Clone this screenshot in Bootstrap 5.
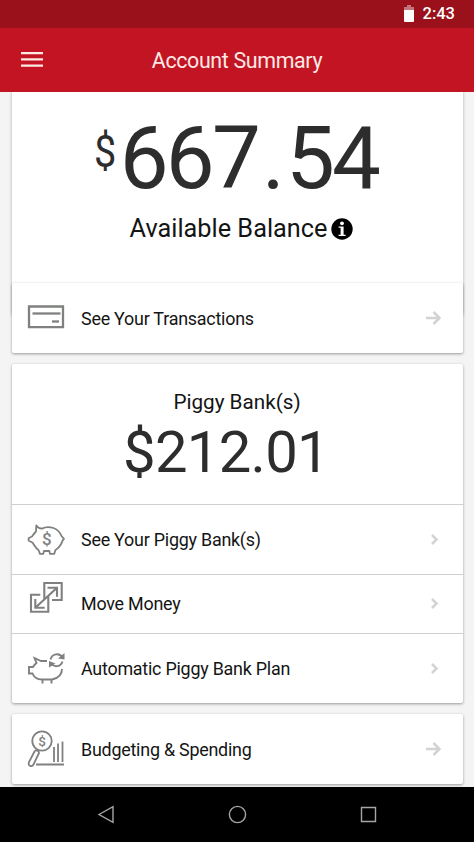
<!DOCTYPE html>
<html lang="en">
<head>
<meta charset="utf-8">
<meta name="viewport" content="width=device-width, initial-scale=1">
<title>Account Summary</title>
<link rel="stylesheet" href="https://cdn.jsdelivr.net/npm/bootstrap@5.3.0/dist/css/bootstrap.min.css">
<style>
body{font-family:Roboto,"Liberation Sans",sans-serif;background:#f4f4f4;color:#141414;width:474px;height:842px;overflow:hidden}
.status-bar{height:28px;background:#9a101b;color:#fff;padding-right:19px;gap:9px;font-size:16.5px;font-weight:500;line-height:30px}
.app-bar{height:64px;background:#c31424;color:#ffe9e4}
.app-bar .btn{width:44px;height:44px;margin-left:10px}
.app-title{font-size:21.4px;letter-spacing:-.35px;line-height:62px;padding-top:2px}
.app-side{width:64px}
.page-body{height:695px;padding:0 11.5px}
.panel{border:0;border-radius:2px;box-shadow:0 1px 3px rgba(0,0,0,.38);background:#fff}
.panel-top{height:223px;margin-bottom:-32px;border-radius:0;box-shadow:0 0 3px rgba(0,0,0,.3)}
.panel-gap{margin-top:11px}
.amount{color:#2d2d2d;white-space:nowrap}
.amount-main{height:110px;margin-top:11px;font-size:87px;line-height:110px;letter-spacing:-2.8px;padding-left:2px}
.amount-main .currency{font-size:45px;line-height:98px;letter-spacing:0;width:22px;margin-left:-4px;margin-right:4px;transform:scaleX(.88);transform-origin:left}
.amount-main .point{letter-spacing:0;margin-left:4px;margin-right:1px}
.balance-label{font-size:25.3px;line-height:32px;gap:4px;padding-left:9px}
.piggy-head{height:140px;padding-top:22px}
.piggy-title{font-size:20.7px;line-height:32px}
.amount-piggy{font-size:58px;line-height:69px;letter-spacing:-.7px;padding-right:22px}
.row-link{height:70px;padding:0 19px 0 14.5px;font-size:17.9px;letter-spacing:-.23px;color:#141414}
.row-link svg{flex:none;overflow:visible}
.row-link .label{margin-left:15px;padding-top:2px}
.row-divider{border-top:1px solid #cfcfcf}
.row-divider .label{padding-top:1px}
.row-short{height:59px}
.nav-bar{height:55px;background:#000}
.ico{fill:none;stroke:#7f817f;stroke-width:2.3}
.ico text{fill:#7f817f;stroke:none;font-weight:500}
.go{fill:none;stroke:#d3d3d3;stroke-width:2.5}
.nav-bar svg{fill:none;stroke:#a6a6a6;stroke-width:1.4}
</style>
</head>
<body>
<div class="status-bar d-flex justify-content-end align-items-center">
  <svg width="10" height="18" viewBox="0 0 10 18"><path d="M0 2h3V0h4v2h3v3H0z" fill="#c5747a"/><path d="M0 5h10v11a1 1 0 0 1-1 1H1a1 1 0 0 1-1-1z" fill="#fff"/></svg>
  <span>2:43</span>
</div>
<header class="app-bar d-flex align-items-center">
  <div class="app-side"><button class="btn border-0 p-0 d-flex align-items-center justify-content-center" aria-label="Menu">
    <svg width="22" height="16" viewBox="0 0 22 16"><path d="M0 1h22M0 7.300h22M0 13.600h22" stroke="#ffe9e4" stroke-width="2.300"/></svg>
  </button></div>
  <div class="app-title flex-grow-1 text-center">Account Summary</div>
  <div class="app-side"></div>
</header>
<main class="page-body overflow-hidden">
  <section class="panel panel-top d-flex flex-column align-items-center">
    <div class="amount amount-main d-flex"><span class="currency">$</span><span>667<span class="point">.</span>54</span></div>
    <div class="balance-label d-flex align-items-center"><span>Available Balance</span>
      <svg width="22" height="22" viewBox="0 0 22 22"><circle cx="11" cy="11" r="10.700"/><circle cx="11" cy="5.300" r="1.900" fill="#fff"/><path d="M7.600 8.500h5v8.300h2v1.200H7.600v-1.200h2V9.700h-2z" fill="#fff"/></svg>
    </div>
  </section>
  <section class="panel position-relative">
    <a href="#" class="row-link d-flex align-items-center text-decoration-none">
      <svg class="ico" width="40" height="40" viewBox="0 0 40 40"><path d="M3 8.500h34v20.600H3z"/><path d="M6.500 15.500h28"/><path d="M26 23.500h7"/></svg>
      <span class="label me-auto">See Your Transactions</span>
      <svg class="go" width="20" height="20" viewBox="0 0 20 20"><path d="M2 10h13M9.500 4l6 6-6 6"/></svg>
    </a>
  </section>
  <section class="panel panel-gap">
    <div class="piggy-head text-center">
      <div class="piggy-title">Piggy Bank(s)</div>
      <div class="amount amount-piggy">$212.01</div>
    </div>
    <a href="#" class="row-link row-divider d-flex align-items-center text-decoration-none">
      <svg class="ico" width="40" height="40" viewBox="0 0 40 40"><path d="M10.300 5.500 Q12 8.500 16 8.600 Q21 5.800 27.500 8 Q33.500 10.500 35.500 16 L38 18.800 Q36.500 20 35.300 23.800 Q33 28 29.300 30.300 L28.300 33.800H24L23.300 31H18L17.300 33.800H14L12.500 30Q10 28.500 6.700 22.800L2.600 20.500V18.200L6 16.500 Q8 13.500 10 11.500Z" stroke-width="1.800" stroke-linejoin="round"/><text x="20.800" y="25.200" text-anchor="middle" font-size="17">$</text></svg>
      <span class="label me-auto">See Your Piggy Bank(s)</span>
      <svg class="go" width="20" height="20" viewBox="0 0 20 20"><path d="M8 5l4.500 4.500L8 14"/></svg>
    </a>
    <a href="#" class="row-link row-short row-divider d-flex align-items-center text-decoration-none">
      <svg class="ico" width="40" height="40" viewBox="0 0 40 40"><path d="M18.300 15.400V-1H35.700V16H26M14.300 10.700H5V27.700H22.300V11.500M31 3.700 9.300 23.700M21.500 3.700H31V12.700M9.300 15V23.700H18.700" stroke-width="2.100"/></svg>
      <span class="label me-auto">Move Money</span>
      <svg class="go" width="20" height="20" viewBox="0 0 20 20"><path d="M8 5l4.500 4.500L8 14"/></svg>
    </a>
    <a href="#" class="row-link row-divider d-flex align-items-center text-decoration-none">
      <svg class="ico" width="40" height="40" viewBox="0 0 40 40"><path d="M21 12H15L8.500 9 10.500 14Q8.500 15.500 7 18H3V24.500H6.500Q9 30.500 16 30.500H26Q36 28.500 36 20M16.500 30.500V34.500M25.500 30.500V34.500" stroke-width="1.900"/><path d="M24.500 10.500A6.500 6.500 0 0 1 36.500 8.500M36.500 12.500A6.500 6.500 0 0 1 25 14.500" stroke-width="1.900"/><path d="M38.500 4V10.500L32 9.500zM23 18.500V12L29.500 14.500z" fill="#7f817f" stroke="none"/></svg>
      <span class="label me-auto">Automatic Piggy Bank Plan</span>
      <svg class="go" width="20" height="20" viewBox="0 0 20 20"><path d="M8 5l4.500 4.500L8 14"/></svg>
    </a>
  </section>
  <section class="panel panel-gap">
    <a href="#" class="row-link d-flex align-items-center text-decoration-none">
      <svg class="ico" width="40" height="40" viewBox="0 0 40 40"><g stroke-width="1.800"><circle cx="16" cy="12" r="9.700"/><path d="M9 21.500 3 33Q2 36.500 4.500 37 6.500 37.500 7.500 35.500L13 24Q13 21 9 21.500"/><path d="M10 35.500H38M28 18V33M32 14.500V33M36.500 12.500V33"/></g><text x="16" y="16.800" text-anchor="middle" font-size="13.500">$</text></svg>
      <span class="label me-auto">Budgeting &amp; Spending</span>
      <svg class="go" width="20" height="20" viewBox="0 0 20 20"><path d="M2 10h13M9.500 4l6 6-6 6"/></svg>
    </a>
  </section>
</main>
<nav class="nav-bar d-flex justify-content-center align-items-center">
  <svg width="131" height="24" viewBox="0 0 131 24"><path d="M58 11.500 72 3.700V19.300z"/></svg>
  <svg width="131" height="24" viewBox="0 0 131 24"><circle cx="65.500" cy="11.500" r="8.100"/></svg>
  <svg width="131" height="24" viewBox="0 0 131 24"><path d="M58.500 4.500h14v14h-14z"/></svg>
</nav>
<script src="https://cdn.jsdelivr.net/npm/bootstrap@5.3.0/dist/js/bootstrap.bundle.min.js"></script>
</body>
</html>
